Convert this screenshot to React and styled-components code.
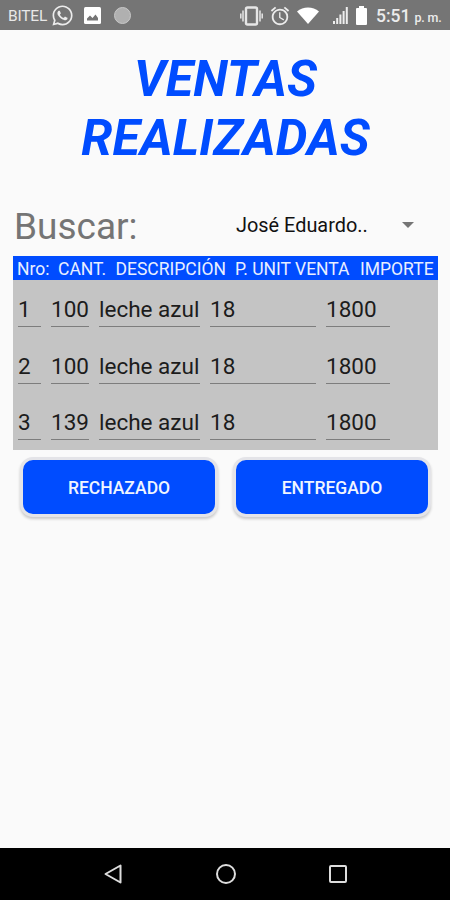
import React from 'react';
import styled, { createGlobalStyle } from 'styled-components';
import { FaWhatsapp } from 'react-icons/fa';
import { MdAlarm } from 'react-icons/md';

const GlobalStyle = createGlobalStyle`
  *{
    box-sizing: border-box;
    margin: 0;
    padding: 0;
  }
  body{
    background: #fafafa;
    font-family: Roboto, sans-serif;
  }
`;

const Screen = styled.div`
  width: 450px;
  height: 900px;
  display: flex;
  flex-direction: column;
  background: #fafafa;
  overflow: hidden;
`;

const StatusBar = styled.header`
  height: 30px;
  flex-shrink: 0;
  display: flex;
  align-items: center;
  padding: 1px 9px 0 8px;
  background: #757575;
  color: #ececec;

  svg{
    display: block;
    flex-shrink: 0;
  }
`;

const Carrier = styled.span`
  width: 43px;
  font-size: 15.5px;
  letter-spacing: -.2px;
  color: #e8e8e8;
`;

const Dot = styled.span`
  width: 17px;
  height: 17px;
  border-radius: 50%;
  background: #b0b0b0;
  border: 1px solid #c8c8c8;
`;

const StatusIcons = styled.div`
  display: flex;
  align-items: center;
  margin-left: ${(props) => props.$left};
  gap: ${(props) => props.$gap};
`;

const Clock = styled.span`
  width: 65px;
  margin-left: 9px;
  font-size: 17.5px;
  font-weight: 500;
  white-space: nowrap;

  small{
    font-size: 12.5px;
    margin-left: 4px;
    letter-spacing: -.2px;
  }
`;

const Main = styled.main`
  flex: 1;
  padding: 19px 12px 0 13px;
`;

const Title = styled.h1`
  color: #004cff;
  font-size: 50.2px;
  font-weight: 700;
  font-style: italic;
  line-height: 59px;
  text-align: center;
`;

const SearchRow = styled.div`
  height: 89px;
  display: flex;
  align-items: center;
  padding-top: 30px;
`;

const SearchLabel = styled.label`
  width: 223px;
  padding-left: 1px;
  font-size: 37px;
  color: #757575;
`;

const Picker = styled.div`
  width: 178px;
  display: flex;
  align-items: center;
  justify-content: space-between;
  padding-bottom: 3px;
  font-size: 19.9px;
  color: #111;
`;

const Table = styled.section`
  height: 194px;
  background: #c4c4c4;
`;

const TableHead = styled.div`
  height: 24px;
  display: grid;
  grid-template-columns: 41px 57.5px 119.5px 125px 1fr;
  align-items: center;
  padding-left: 4px;
  padding-top: 2px;
  margin-bottom: 13px;
  background: #004cff;
  color: #e8efff;
  font-size: 17.5px;
  white-space: nowrap;
`;

const Row = styled.div`
  display: grid;
  grid-template-columns: 23px 38px 101px 106px 64px;
  column-gap: 10px;
  padding-left: 5px;
  margin-bottom: 22.7px;
`;

const Cell = styled.span`
  height: 34px;
  border-bottom: 1px solid #7d7d7d;
  color: #1c1c1c;
  font-size: 22.5px;
  line-height: 33px;
  white-space: nowrap;
`;

const Actions = styled.div`
  display: flex;
  gap: 15px;
  padding: 7px 0 0 7px;
`;

const Button = styled.button`
  width: 198px;
  height: 60px;
  padding-top: 2px;
  border: 3px solid #e4e4e8;
  border-radius: 13px;
  background: #004cff;
  box-shadow: 0 2px 3px rgba(0,0,0,.2);
  color: #f0f5ff;
  font-family: inherit;
  font-size: 17.5px;
  font-weight: 500;
`;

const NavBar = styled.nav`
  height: 52px;
  flex-shrink: 0;
  display: flex;
  align-items: center;
  justify-content: space-between;
  padding: 0 100px 0 101px;
  background: #000;
`;

const ventas = [
  { nro: 1, cant: 100, descripcion: 'leche azul', precio: 18, importe: 1800 },
  { nro: 2, cant: 100, descripcion: 'leche azul', precio: 18, importe: 1800 },
  { nro: 3, cant: 139, descripcion: 'leche azul', precio: 18, importe: 1800 },
];

function ImageIcon() {
  return (
    <svg width="17" height="17" viewBox="0 0 17 17">
      <rect width="17" height="17" rx="1.5" fill="#fff" />
      <path d="M3 13.5v-2l3-3 2.5 2.5 3-3.5 2.5 3.5v2.5z" fill="#757575" />
    </svg>
  )
}

function VibrationIcon() {
  return (
    <svg width="23" height="20" viewBox="0 0 23 20" fill="none" stroke="#e6e6e6">
      <rect x="6" y="1.5" width="11" height="17" rx="1.5" strokeWidth="2.4" />
      <path d="M3 4.5v11M20 4.5v11M.8 7.5v5M22.2 7.5v5" strokeWidth="1.5" />
    </svg>
  )
}

function WifiIcon() {
  return (
    <svg width="22" height="17" viewBox="0 0 22 17" fill="#fff">
      <path d="M0 4.5C6-.8 16-.8 22 4.5L11 17z" />
    </svg>
  )
}

function SignalIcon() {
  return (
    <svg width="15" height="17" viewBox="0 0 15 17" fill="#eee">
      <path d="M0 14h2v3H0zM3.2 11h2v6h-2zM6.4 7.5h2V17h-2zM9.6 4h2v13h-2zM12.8 0h2v17h-2z" />
    </svg>
  )
}

function BatteryIcon() {
  return (
    <svg width="11" height="19" viewBox="0 0 11 19" fill="#fff">
      <path d="M3 0h5v2h2q1 0 1 1v15q0 1-1 1H1q-1 0-1-1V3q0-1 1-1h2z" />
    </svg>
  )
}

export default function App() {
  return (
    <>
      <GlobalStyle />
      <Screen>
        <StatusBar>
          <Carrier>BITEL</Carrier>
          <FaWhatsapp size={23} />
          <StatusIcons $left="10px" $gap="13px">
            <ImageIcon />
            <Dot />
          </StatusIcons>
          <StatusIcons $left="auto" $gap="6px">
            <VibrationIcon />
            <MdAlarm size={22} />
            <WifiIcon />
          </StatusIcons>
          <StatusIcons $left="14px" $gap="8px">
            <SignalIcon />
            <BatteryIcon />
          </StatusIcons>
          <Clock>5:51<small>p. m.</small></Clock>
        </StatusBar>

        <Main>
          <Title>VENTAS<br />REALIZADAS</Title>
          <SearchRow>
            <SearchLabel>Buscar:</SearchLabel>
            <Picker>
              José Eduardo..
              <svg width="12" height="6" viewBox="0 0 12 6" fill="#757575">
                <path d="M0 0h12L6 6z" />
              </svg>
            </Picker>
          </SearchRow>

          <Table>
            <TableHead>
              <span>Nro:</span>
              <span>CANT.</span>
              <span>DESCRIPCIÓN</span>
              <span>P. UNIT VENTA</span>
              <span>IMPORTE</span>
            </TableHead>
            {ventas.map((venta) => (
              <Row key={venta.nro}>
                <Cell>{venta.nro}</Cell>
                <Cell>{venta.cant}</Cell>
                <Cell>{venta.descripcion}</Cell>
                <Cell>{venta.precio}</Cell>
                <Cell>{venta.importe}</Cell>
              </Row>
            ))}
          </Table>

          <Actions>
            <Button>RECHAZADO</Button>
            <Button>ENTREGADO</Button>
          </Actions>
        </Main>

        <NavBar>
          <svg width="24" height="24" viewBox="0 0 24 24" fill="none" stroke="#ddd" strokeWidth="2">
            <path d="M19.5 3.5v17L4.5 12z" strokeLinejoin="round" />
          </svg>
          <svg width="24" height="24" viewBox="0 0 24 24" fill="none" stroke="#ddd" strokeWidth="2">
            <circle cx="12" cy="12" r="9" />
          </svg>
          <svg width="24" height="24" viewBox="0 0 24 24" fill="none" stroke="#ddd" strokeWidth="2">
            <rect x="4" y="4" width="16" height="16" rx="1" />
          </svg>
        </NavBar>
      </Screen>
    </>
  )
}
